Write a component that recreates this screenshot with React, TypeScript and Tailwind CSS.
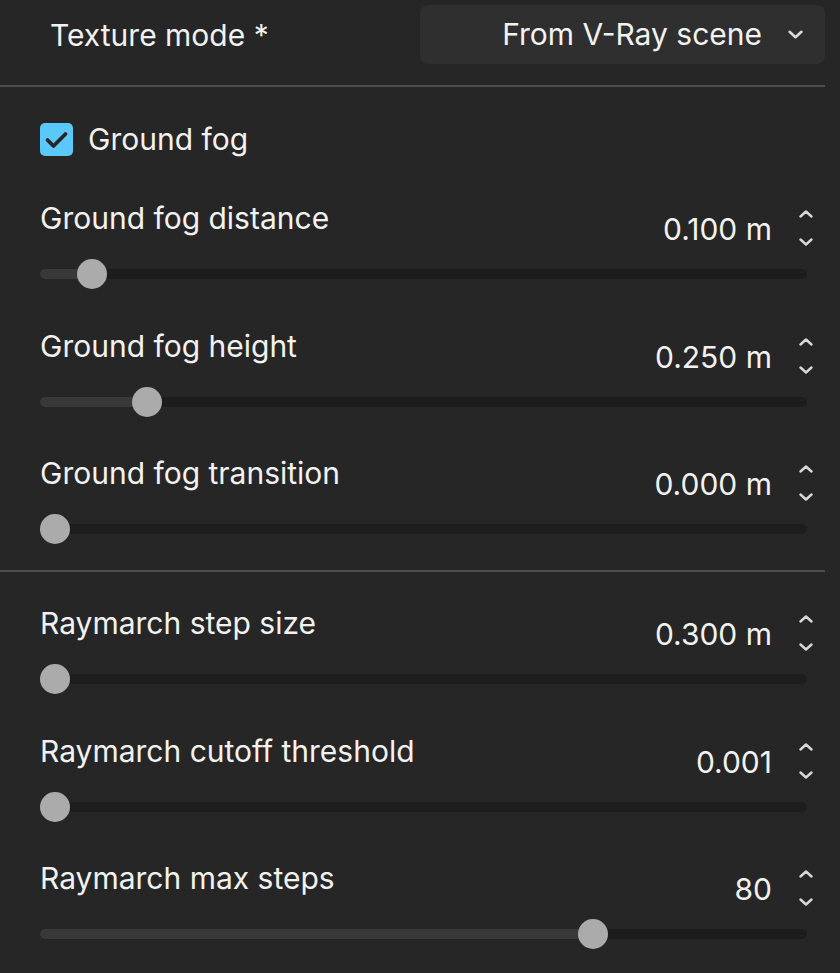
import { useState } from 'react'

type SliderRowProps = {
  label: string
  value: string
  fraction: number
}

function Chevron({ up = false, className = '' }: { up?: boolean; className?: string }) {
  return (
    <svg className={className} viewBox="0 0 14 8" fill="none" stroke="currentColor" strokeWidth="2.4" strokeLinecap="round" strokeLinejoin="round">
      {up ? <polyline points="1.5,6.5 7,1.5 12.5,6.5" /> : <polyline points="1.5,1.5 7,6.5 12.5,1.5" />}
    </svg>
  )
}

function SliderRow({ label, value, fraction }: SliderRowProps) {
  // thumb travels from track start to track end minus its own width
  const thumbLeft = `calc((100% - 30px) * ${fraction})`
  return (
    <div className="flex flex-col">
      <div className="flex h-[34px] items-start justify-between">
        <span className="text-[30px] leading-[34px] text-[#f2f2f2]">{label}</span>
        <div className="mt-[9px] flex items-center">
          <span className="text-[30px] leading-[34px] text-[#f2f2f2]">{value}</span>
          <div className="mr-[-6px] ml-[27px] flex flex-col gap-[20px] pb-[2px] text-[#d8d8d8]">
            <Chevron up className="h-[8px] w-[14px]" />
            <Chevron className="h-[8px] w-[14px]" />
          </div>
        </div>
      </div>
      <div className="relative mt-[24px] h-[30px]">
        <div className="absolute top-[10px] right-0 left-0 h-[10px] rounded-full bg-[#1d1d1d]" />
        <div
          className="absolute top-[10px] left-0 h-[10px] rounded-l-full bg-[#393939]"
          style={{ width: `calc(${thumbLeft} + 15px)` }}
        />
        <div
          className="absolute top-0 h-[30px] w-[30px] rounded-full bg-[#ababab]"
          style={{ left: thumbLeft }}
        />
      </div>
    </div>
  )
}

export default function App() {
  const [fog, setFog] = useState(true)

  return (
    <div className="h-[973px] w-[840px] overflow-hidden bg-[#262626] font-['Inter',sans-serif]">
      <div className="w-[825px]">
        <div className="flex items-center justify-between pt-[5px]">
          <span className="pl-[50px] text-[30px] leading-[34px] text-[#f2f2f2]">Texture mode *</span>
          <button
            type="button"
            className="flex h-[59px] w-[405px] items-center justify-end gap-[26px] rounded-[8px] bg-[#2f2f2f] pr-[22px] text-[30px] text-[#f2f2f2]"
          >
            <span>From V-Ray scene</span>
            <Chevron className="h-[9px] w-[15px] text-[#dcdcdc]" />
          </button>
        </div>

        <div className="mt-[21px] h-[2px] bg-[#4d4d4d]" />

        <div className="pr-[18px] pl-[40px]">
          <label className="mt-[35px] flex items-center gap-[15px]">
            <button
              type="button"
              onClick={() => setFog(!fog)}
              className="flex h-[33px] w-[33px] items-center justify-center rounded-[5px] bg-[#5ac8fa]"
            >
              {fog && (
                <svg viewBox="0 0 33 33" className="h-[33px] w-[33px]" fill="none" stroke="#262626" strokeWidth="3.8" strokeLinecap="round" strokeLinejoin="round">
                  <polyline points="7.5,17 13.5,23 25.5,11" />
                </svg>
              )}
            </button>
            <span className="text-[30px] leading-[34px] text-[#f2f2f2]">Ground fog</span>
          </label>

          <div className="mt-[45px] flex flex-col gap-y-[39.5px]">
            <SliderRow label="Ground fog distance" value="0.100 m" fraction={0.05} />
            <SliderRow label="Ground fog height" value="0.250 m" fraction={0.125} />
            <SliderRow label="Ground fog transition" value="0.000 m" fraction={0} />
          </div>
        </div>

        <div className="mt-[26px] h-[2px] bg-[#4d4d4d]" />

        <div className="mt-[34px] flex flex-col gap-y-[39.5px] pr-[18px] pl-[40px]">
          <SliderRow label="Raymarch step size" value="0.300 m" fraction={0} />
          <SliderRow label="Raymarch cutoff threshold" value="0.001" fraction={0} />
          <SliderRow label="Raymarch max steps" value="80" fraction={0.73} />
        </div>
      </div>
    </div>
  )
}
